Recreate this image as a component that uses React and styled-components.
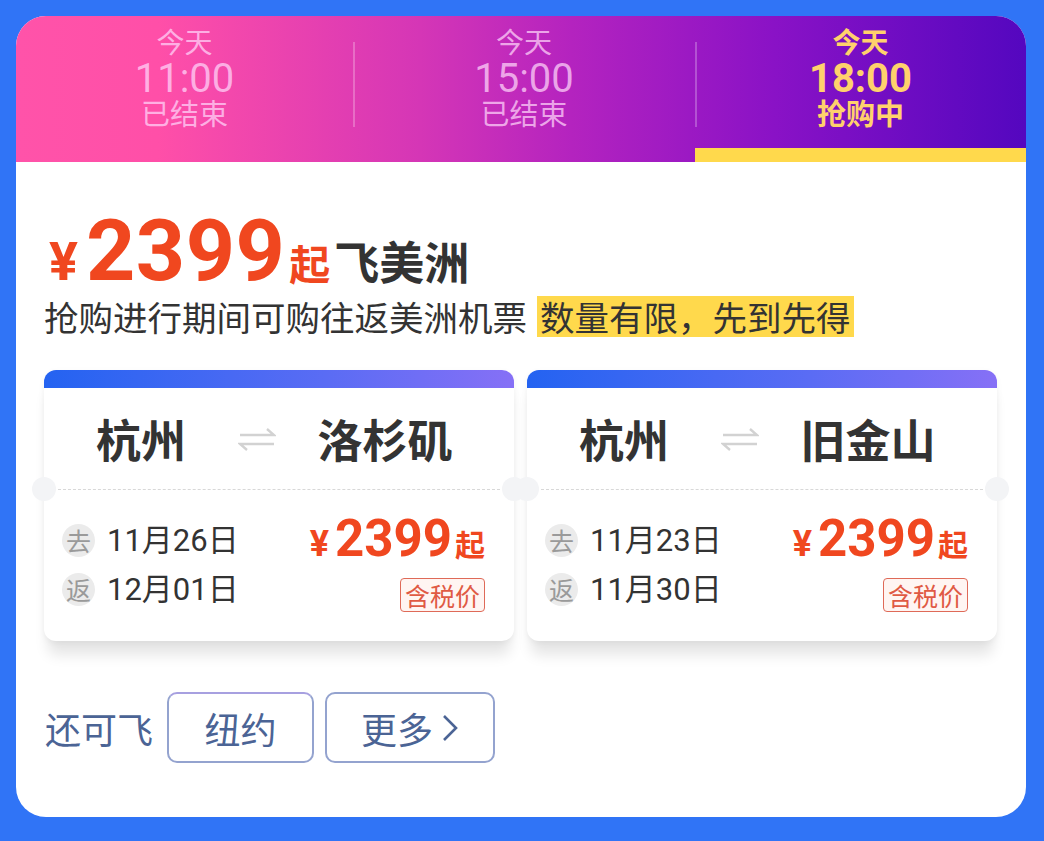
import React from "react";
import styled, { createGlobalStyle, css } from "styled-components";

const GlobalStyle = createGlobalStyle`
  html, body {
    margin: 0;
    padding: 0;
    background: #3074f6;
  }
  body {
    font-family: Roboto, "Noto Sans CJK SC", "Noto Sans", sans-serif;
  }
`;

const Page = styled.div`
  width: 1044px;
  height: 841px;
  box-sizing: border-box;
  padding: 16px 18px 0 16px;
  background: #3074f6;
`;

const Card = styled.div`
  width: 1010px;
  height: 801px;
  background: #fff;
  border-radius: 30px;
  overflow: hidden;
`;

const Tabs = styled.div`
  display: grid;
  grid-template-columns: 337px 342px 331px;
  height: 146px;
  background: linear-gradient(
    90deg,
    #ff53a9 0%,
    #ff4fa8 14%,
    #d536b6 40%,
    #b423bf 55%,
    #8a12c6 75%,
    #5407bf 100%
  );
`;

const Tab = styled.div`
  position: relative;
  display: flex;
  flex-direction: column;
  align-items: center;
  padding-top: 13px;
  color: ${({ active }) => (active ? "#ffd16c" : "rgba(255, 214, 250, 0.72)")};
  font-weight: ${({ active }) => (active ? 700 : 400)};
  ${({ active }) =>
    active &&
    css`
      box-shadow: inset 0 -14px 0 #ffd94c;
    `}

  ${({ divider }) =>
    divider &&
    css`
      &::before {
        content: "";
        position: absolute;
        left: 0;
        top: 26px;
        height: 85px;
        width: 2px;
        background: rgba(255, 255, 255, 0.25);
      }
    `}
`;

const TabDay = styled.div`
  font-size: 28px;
  line-height: 30px;
`;

const TabTime = styled.div`
  font-size: 40px;
  line-height: 39px;
`;

const TabState = styled.div`
  font-size: 29px;
  line-height: 34px;
`;

const Body = styled.div`
  padding: 47px 29px 0 28px;
`;

const Headline = styled.div`
  line-height: 84px;
  height: 84px;
  white-space: nowrap;
  color: #f0471f;
  font-weight: 700;
`;

const Yen = styled.span`
  font-size: ${({ size }) => size}px;
  margin-right: ${({ gap }) => gap || 0}px;
  margin-left: ${({ shift }) => shift || 0}px;
`;

const Amount = styled.span`
  font-size: ${({ size }) => size}px;
  letter-spacing: ${({ track }) => track || 0}px;
  font-family: Roboto, sans-serif;
`;

const From = styled.span`
  font-size: ${({ size }) => size}px;
  margin-left: ${({ gap }) => gap || 0}px;
  font-family: "Noto Sans CJK SC", sans-serif;
`;

const Dest = styled.span`
  font-size: 45px;
  margin-left: 4px;
  color: #333;
  font-family: "Noto Sans CJK SC", sans-serif;
`;

const Subtitle = styled.div`
  margin-top: 2px;
  font-size: 34.5px;
  line-height: 42px;
  color: #333;
  white-space: nowrap;
  font-family: "Noto Sans CJK SC", sans-serif;
`;

const Mark = styled.span`
  display: inline-block;
  background: #ffd94c;
  margin-left: 10px;
  padding: 0 3px;
  line-height: 41px;
`;

const Tickets = styled.div`
  margin-top: 33px;
  display: grid;
  grid-template-columns: 1fr 1fr;
  gap: 13px;
`;

const Ticket = styled.div`
  position: relative;
  height: 271px;
  border-radius: 12px;
  background: #fff;
  overflow: hidden;
  box-shadow: 0 18px 14px -4px rgba(0, 0, 0, 0.1), 0 2px 6px rgba(0, 0, 0, 0.05);
`;

const TicketWrap = styled.div`
  position: relative;
`;

const TopBar = styled.div`
  height: 18px;
  background: linear-gradient(90deg, #2463f1 0%, #5a6cf4 60%, #8670f6 100%);
`;

const Cities = styled.div`
  display: grid;
  grid-template-columns: 194px 30px 234px;
  align-items: center;
  height: 101px;
  font-family: "Noto Sans CJK SC", sans-serif;
  font-weight: 700;
  font-size: 45px;
  color: #333;
`;

const City = styled.div`
  text-align: center;
  line-height: 50px;
`;

const Divider = styled.div`
  margin: 0 14px;
  border-top: 1.5px dashed #d8d8d8;
`;

const Notch = styled.div`
  position: absolute;
  top: 107px;
  ${({ side }) => side}: -12px;
  width: 24px;
  height: 24px;
  border-radius: 50%;
  background: #f3f4f6;
  z-index: 2;
`;

const Details = styled.div`
  display: flex;
  align-items: center;
  justify-content: space-between;
  height: 150px;
  padding: 0 29px 2px 18px;
`;

const Dates = styled.div`
  display: flex;
  flex-direction: column;
  gap: 16px;
`;

const DateRow = styled.div`
  display: flex;
  align-items: center;
  gap: 12px;
  font-size: 31px;
  color: #333;
  line-height: 33px;
`;

const Badge = styled.span`
  width: 33px;
  height: 33px;
  border-radius: 50%;
  background: #ebebeb;
  color: #9a9a9a;
  font-size: 25px;
  display: flex;
  align-items: center;
  justify-content: center;
  font-family: "Noto Sans CJK SC", sans-serif;
`;

const PriceCol = styled.div`
  display: flex;
  flex-direction: column;
  align-items: flex-end;
  gap: 6px;
`;

const SmallPrice = styled.div`
  color: #f0471f;
  font-weight: 700;
  line-height: 42px;
  white-space: nowrap;
`;

const Tax = styled.span`
  border: 1.5px solid #df6a58;
  border-radius: 4px;
  background: #fff5f2;
  color: #e05a44;
  font-size: 25px;
  line-height: 32px;
  padding: 0 4px;
  font-family: "Noto Sans CJK SC", sans-serif;
`;

const More = styled.div`
  margin-top: 51px;
  display: flex;
  align-items: center;
  gap: 11px;
  font-family: "Noto Sans CJK SC", sans-serif;
  color: #4b6495;
  font-size: 36px;
`;

const MoreLabel = styled.span`
  margin-right: 3px;
  margin-left: 1px;
`;

const CityButton = styled.div`
  box-sizing: border-box;
  width: ${({ w }) => w}px;
  height: 71px;
  border: 2px solid #94a3cf;
  border-top-color: ${({ glow }) => (glow ? "#a7a0e0" : "#94a3cf")};
  border-radius: 10px;
  display: flex;
  align-items: center;
  justify-content: center;
  gap: 8px;
`;

const tickets = [
  { to: "洛杉矶", go: "11月26日", back: "12月01日" },
  { to: "旧金山", go: "11月23日", back: "11月30日" },
];

const SwapIcon = () => (
  <svg width="38" height="24" viewBox="0 0 38 24" fill="none" stroke="#d2d2d2" strokeWidth="2.4">
    <path d="M2 8 H36 L29 2" />
    <path d="M36 17 H2 L9 23" />
  </svg>
);

const Chevron = () => (
  <svg width="18" height="30" viewBox="0 0 18 30" fill="none" stroke="#4b6495" strokeWidth="2.6">
    <path d="M3 3 L15 15 L3 27" />
  </svg>
);

const App = () => (
  <>
    <GlobalStyle />
    <Page>
      <Card>
        <Tabs>
          <Tab>
            <TabDay>今天</TabDay>
            <TabTime>11:00</TabTime>
            <TabState>已结束</TabState>
          </Tab>
          <Tab divider>
            <TabDay>今天</TabDay>
            <TabTime>15:00</TabTime>
            <TabState>已结束</TabState>
          </Tab>
          <Tab divider active>
            <TabDay>今天</TabDay>
            <TabTime>18:00</TabTime>
            <TabState>抢购中</TabState>
          </Tab>
        </Tabs>
        <Body>
          <Headline>
            <Yen size={54} gap={8} shift={5}>
              ¥
            </Yen>
            <Amount size={86} track={0.5}>
              2399
            </Amount>
            <From size={41} gap={4}>
              起
            </From>
            <Dest>飞美洲</Dest>
          </Headline>
          <Subtitle>
            抢购进行期间可购往返美洲机票
            <Mark>数量有限，先到先得</Mark>
          </Subtitle>
          <Tickets>
            {tickets.map((t) => (
              <TicketWrap key={t.to}>
                <Ticket>
                  <TopBar />
                  <Cities>
                    <City>杭州</City>
                    <SwapIcon />
                    <City>{t.to}</City>
                  </Cities>
                  <Divider />
                  <Details>
                    <Dates>
                      <DateRow>
                        <Badge>去</Badge>
                        {t.go}
                      </DateRow>
                      <DateRow>
                        <Badge>返</Badge>
                        {t.back}
                      </DateRow>
                    </Dates>
                    <PriceCol>
                      <SmallPrice>
                        <Yen size={36} gap={6}>
                          ¥
                        </Yen>
                        <Amount size={51}>2399</Amount>
                        <From size={30} gap={3}>
                          起
                        </From>
                      </SmallPrice>
                      <Tax>含税价</Tax>
                    </PriceCol>
                  </Details>
                </Ticket>
                <Notch side="left" />
                <Notch side="right" />
              </TicketWrap>
            ))}
          </Tickets>
          <More>
            <MoreLabel>还可飞</MoreLabel>
            <CityButton w={147} glow>
              纽约
            </CityButton>
            <CityButton w={170}>
              更多
              <Chevron />
            </CityButton>
          </More>
        </Body>
      </Card>
    </Page>
  </>
);

export default App;
